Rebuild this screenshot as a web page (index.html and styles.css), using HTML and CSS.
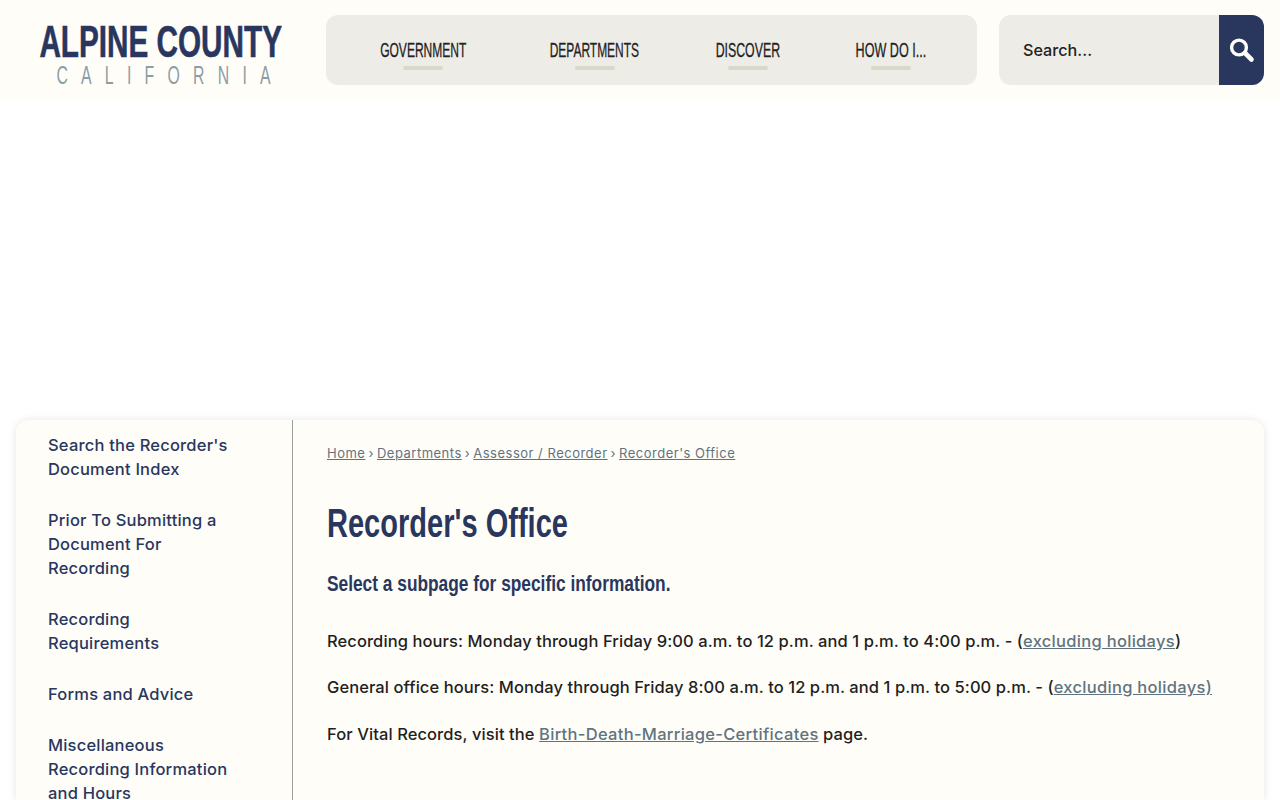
FILE: index.html
```html
<!DOCTYPE html>
<html lang="en">
<head>
<meta charset="utf-8">
<title>Recorder's Office</title>
<link rel="stylesheet" href="styles.css">
</head>
<body>
<header class="header">
  <a class="logo" href="#">
    <span class="logo-main">ALPINE COUNTY</span>
    <span class="logo-sub">CALIFORNIA</span>
  </a>
  <nav class="nav">
    <a class="nav-item nav-gov" href="#"><span>GOVERNMENT</span></a>
    <a class="nav-item nav-dep" href="#"><span>DEPARTMENTS</span></a>
    <a class="nav-item nav-dis" href="#"><span>DISCOVER</span></a>
    <a class="nav-item nav-how" href="#"><span>HOW DO I...</span></a>
  </nav>
  <form class="search">
    <span class="search-text">Search...</span>
    <span class="search-btn">
      <svg width="26" height="26" viewBox="0 0 26 26" fill="none" stroke="#fffdf8">
        <circle cx="10" cy="10.5" r="7.4" stroke-width="3.4"/>
        <path d="M16 16l6.5 6.5" stroke-width="4.6" stroke-linecap="round"/>
      </svg>
    </span>
  </form>
</header>
<div class="hero"></div>
<main class="page">
  <aside class="side">
    <a href="#">Search the Recorder's Document Index</a>
    <a href="#">Prior To Submitting a Document For Recording</a>
    <a href="#">Recording Requirements</a>
    <a href="#">Forms and Advice</a>
    <a href="#">Miscellaneous Recording Information and Hours</a>
  </aside>
  <section class="content">
    <div class="crumbs"><a href="#">Home</a><span>›</span><a href="#">Departments</a><span>›</span><a href="#">Assessor / Recorder</a><span>›</span><a href="#">Recorder's Office</a></div>
    <h1>Recorder's Office</h1>
    <h2>Select a subpage for specific information.</h2>
    <p>Recording hours: Monday through Friday 9:00 a.m. to 12 p.m. and 1 p.m. to 4:00 p.m. - (<a href="#">excluding holidays</a>)</p>
    <p>General office hours: Monday through Friday 8:00 a.m. to 12 p.m. and 1 p.m. to 5:00 p.m. - (<a href="#">excluding holidays)</a></p>
    <p class="last">For Vital Records, visit the <a href="#">Birth-Death-Marriage-Certificates</a> page.</p>
  </section>
</main>
</body>
</html>
```
FILE: styles.css
```css
* { box-sizing: border-box; }
html, body { margin: 0; height: 800px; overflow: hidden; }
body { background: #fff; font-family: "Inter", "Liberation Sans", sans-serif; color: #1f1f1f; }
a { color: inherit; }

.header { height: 100px; background: #fffdf8; display: flex; align-items: flex-start; padding: 15px 16px 0 0; }
.logo { width: 326px; height: 70px; display: flex; flex-direction: column; align-items: center; text-decoration: none; padding-right: 5px; }
.logo-main { font-family: "Liberation Sans", sans-serif; font-weight: 700; font-size: 44px; line-height: 46px; margin-top: 4px; color: #29375e; white-space: nowrap; transform: scaleX(.675); -webkit-text-stroke: .6px #29375e; }
.logo-sub { font-family: "Liberation Sans", sans-serif; font-size: 25px; line-height: 20px; margin-left: 7px; letter-spacing: 21px; padding-left: 21px; color: #8b9ea6; white-space: nowrap; transform: scaleX(.632); }

.nav { width: 651px; height: 70px; background: #eeece6; border-radius: 12px; display: flex; }
.nav-item { font-family: "Liberation Sans", sans-serif; font-size: 21px; line-height: 24px; color: #222; text-decoration: none; height: 55px; padding-top: 23px; position: relative; white-space: nowrap; display: flex; justify-content: center; }
.nav-item span { display: block; flex: none; -webkit-text-stroke: .3px #222; }
.nav-item::after { content: ""; position: absolute; left: 50%; bottom: 0; width: 40px; height: 4px; margin-left: -20px; border-radius: 2px; background: #d9d8c9; }
.nav-gov { margin-left: 54px; width: 86px; }
.nav-gov span { transform: scaleX(.573); }
.nav-dep { margin-left: 84px; width: 89px; }
.nav-dep span { transform: scaleX(.57); }
.nav-dis { margin-left: 77px; width: 64px; }
.nav-dis span { transform: scaleX(.587); }
.nav-how { margin-left: 75px; width: 71px; }
.nav-how span { transform: scaleX(.6); }

.search { width: 265px; height: 70px; margin-left: 22px; display: flex; background: #eeece6; border-radius: 12px; overflow: hidden; }
.search-text { flex: 1; font-size: 16.2px; font-weight: 500; line-height: 70px; padding-left: 24px; color: #222; }
.search-btn { width: 45px; background: #29375e; display: flex; align-items: center; justify-content: center; }

.hero { height: 320px; background: #fff; }

.page { margin: 0 16px; height: 380px; background: #fffdf8; border-radius: 12px 12px 0 0; box-shadow: 0 0 8px rgba(0,0,0,.1); display: flex; overflow: hidden; }
.side { width: 277px; border-right: 1px solid #9aa0a0; padding: 13px 54px 0 32px; flex: none; display: flex; flex-direction: column; gap: 27px; }
.side a { display: block; font-size: 16.5px; font-weight: 500; line-height: 24px; letter-spacing: .2px; color: #29375e; text-decoration: none; }

.content { flex: 1; padding: 24px 34px 0; }
.crumbs { font-size: 13px; line-height: 19px; letter-spacing: .5px; color: #5f7480; display: flex; gap: 3px; }
h1 { font-family: "Liberation Sans", sans-serif; font-size: 40px; font-weight: 700; line-height: 50px; color: #29375e; margin: 35px 0 0; white-space: nowrap; transform: scaleX(.726); transform-origin: left; }
h2 { font-family: "Liberation Sans", sans-serif; font-size: 22px; font-weight: 700; line-height: 30px; color: #29375e; margin: 21px 0 0; white-space: nowrap; transform: scaleX(.787); transform-origin: left; }
p { font-size: 16.5px; font-weight: 500; line-height: 24px; letter-spacing: .08px; margin: 22px 0 0; color: #1f1f1f; white-space: nowrap; }
h2 + p { margin-top: 30px; }
p.last { margin-top: 23px; }
p a { color: #5f7480; letter-spacing: .3px; }
```
